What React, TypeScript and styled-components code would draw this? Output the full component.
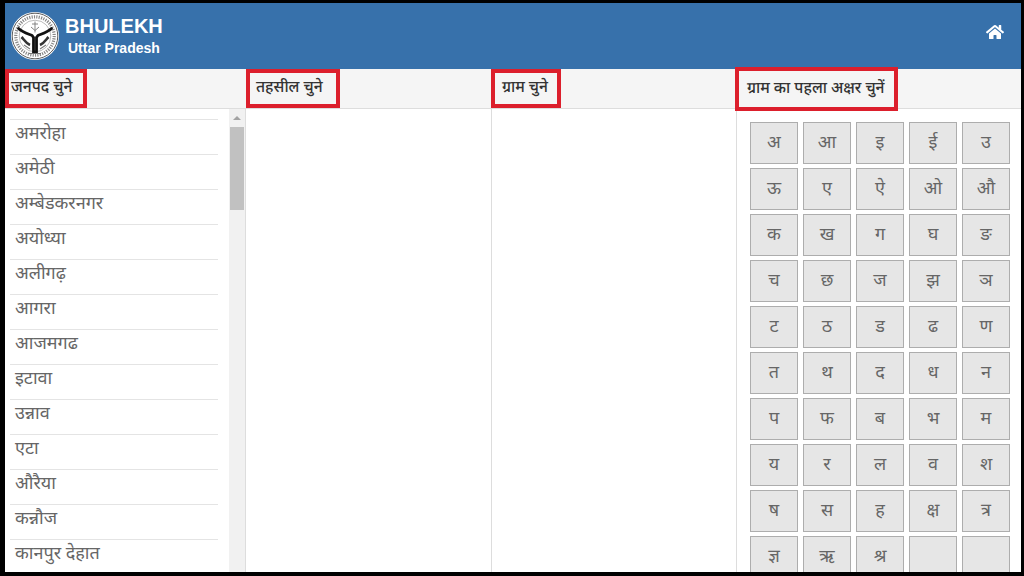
import styled, { createGlobalStyle } from 'styled-components';
import { FaHome } from 'react-icons/fa';

const DISTRICTS = [
  'अमरोहा', 'अमेठी', 'अम्बेडकरनगर', 'अयोध्या', 'अलीगढ़', 'आगरा', 'आजमगढ', 'इटावा', 'उन्नाव', 'एटा',
  'औरैया', 'कन्नौज', 'कानपुर देहात',
];

const LETTERS = [
  'अ', 'आ', 'इ', 'ई', 'उ',
  'ऊ', 'ए', 'ऐ', 'ओ', 'औ',
  'क', 'ख', 'ग', 'घ', 'ङ',
  'च', 'छ', 'ज', 'झ', 'ञ',
  'ट', 'ठ', 'ड', 'ढ', 'ण',
  'त', 'थ', 'द', 'ध', 'न',
  'प', 'फ', 'ब', 'भ', 'म',
  'य', 'र', 'ल', 'व', 'श',
  'ष', 'स', 'ह', 'क्ष', 'त्र',
  'ज्ञ', 'ऋ', 'श्र', '', '',
];

const Emblem = () => (
  <svg width="48" height="48" viewBox="0 0 48 48">
    <circle cx="24" cy="24" r="24" fill="#fff" />
    <circle cx="24" cy="24" r="22.8" fill="none" stroke="#333" strokeWidth="0.8" />
    <circle cx="24" cy="24" r="15.8" fill="none" stroke="#777" strokeWidth="0.5" />
    <circle cx="24" cy="24" r="19.2" fill="none" stroke="#888" strokeWidth="3.2" strokeDasharray="1.2 1.2" />
    <path d="M24 9.500v11M21 12h6M20 15l4 3.500 4-3.500" fill="none" stroke="#777" strokeWidth="0.9" />
    <path
      d="M7.500 16.500c3.500 3.500 10 5.500 13.500 7l1.500 2V40h3V25.500l1.500-2c3.500-1.500 10-3.500 13.500-7"
      fill="none"
      stroke="#111"
      strokeWidth="2.8"
      strokeLinecap="round"
    />
    <path d="M10.500 25c2 2 4 6 8.500 8M37.500 25c-2 2-4 6-8.500 8" fill="none" stroke="#333" strokeWidth="2.6" />
    <path d="M13 33l6 4M35 33l-6 4M18 41.500h12" fill="none" stroke="#777" strokeWidth="1.1" />
  </svg>
);

const App = () => {
  return (
    <Frame>
      <GlobalStyle />
      <Header>
        <Brand>
          <Emblem />
          <BrandText>
            <BrandTitle>BHULEKH</BrandTitle>
            <BrandSub>Uttar Pradesh</BrandSub>
          </BrandText>
        </Brand>
        <HomeLink>
          <FaHome size={18} />
        </HomeLink>
      </Header>

      <Columns>
        <ColumnHead>
          <Label $width={82} $left={2}>
            जनपद चुने
          </Label>
        </ColumnHead>
        <ColumnHead>
          <Label $width={94} $left={6}>
            तहसील चुने
          </Label>
        </ColumnHead>
        <ColumnHead>
          <Label $shift={-1} $width={70} $left={7}>
            ग्राम चुने
          </Label>
        </ColumnHead>
        <ColumnHead>
          <Label $shift={-2} $tall $width={163} $left={8}>
            ग्राम का पहला अक्षर चुनें
          </Label>
        </ColumnHead>

        <Column>
          <DistrictList>
            {DISTRICTS.map((name) => (
              <District key={name}>{name}</District>
            ))}
          </DistrictList>
          <ScrollTrack>
            <ScrollArrow />
            <ScrollThumb />
          </ScrollTrack>
        </Column>
        <Column />
        <Column />
        <LetterGrid>
          {LETTERS.map((letter, i) => (
            <LetterButton key={i}>{letter}</LetterButton>
          ))}
        </LetterGrid>
      </Columns>
    </Frame>
  );
};

export default App;

const DEVANAGARI = `"Noto Sans Devanagari", "Lohit Devanagari", "Liberation Sans", "Noto Sans", sans-serif`;

const GlobalStyle = createGlobalStyle`
  html, body {
    margin: 0;
    height: 576px;
    overflow: hidden;
    background: #000;
  }
  * {
    box-sizing: border-box;
  }
`;

const Frame = styled.div`
  width: 1016px;
  height: 569px;
  margin: 3px 0 0 5px;
  background: #fff;
  overflow: hidden;
  font-family: ${DEVANAGARI};
`;

const Header = styled.header`
  height: 66px;
  background: #3771ab;
  color: #fff;
  display: flex;
  align-items: flex-start;
  justify-content: space-between;
  padding: 9px 17px 0 6px;
`;

const Brand = styled.div`
  display: flex;
  gap: 6px;
`;

const BrandText = styled.div`
  display: flex;
  flex-direction: column;
  padding-top: 2px;
  font-family: 'Liberation Sans', Arial, sans-serif;
  font-weight: 700;
`;

const BrandTitle = styled.div`
  font-size: 20px;
  line-height: 24px;
`;

const BrandSub = styled.div`
  font-size: 14px;
  line-height: 16px;
  margin: 2px 0 0 3px;
`;

const HomeLink = styled.a`
  display: block;
  margin-top: 11px;
  line-height: 0;
  color: #fff;
`;

const Columns = styled.div`
  display: grid;
  grid-template-columns: 241px 246px 245px 1fr;
  grid-template-rows: 40px 485px;
`;

const ColumnHead = styled.div`
  display: flex;
  align-items: center;
  height: 40px;
  background: #f5f5f5;
  border-bottom: 1px solid #ddd;
`;

const Label = styled.div<{ $shift?: number; $tall?: boolean; $width: number; $left: number }>`
  flex: none;
  position: relative;
  z-index: 1;
  left: ${(p) => p.$shift ?? 0}px;
  width: ${(p) => p.$width}px;
  height: ${(p) => (p.$tall ? 44 : 39)}px;
  margin-top: ${(p) => (p.$tall ? 0 : -1)}px;
  display: flex;
  align-items: center;
  padding-left: ${(p) => p.$left}px;
  border: 4px solid #dc1f2c;
  font-size: 15.6px;
  font-weight: 500;
  color: #333;
  white-space: nowrap;
`;

const Column = styled.div`
  position: relative;
  height: 485px;
  border-right: 1px solid #ddd;
`;

const DistrictList = styled.ul`
  list-style: none;
  height: 100%;
  margin: 0;
  padding: 10px 27px 0 5px;
  overflow: hidden;
`;

const District = styled.li`
  height: 35px;
  padding: 2px 5px 0;
  border-top: 1px solid #e4e4e4;
  font-size: 18px;
  line-height: 26px;
  color: #666;
  white-space: nowrap;
`;

const ScrollTrack = styled.div`
  position: absolute;
  top: 0;
  right: 0;
  bottom: 0;
  width: 16px;
  padding: 0 1px;
  background: #f1f1f1;
`;

const ScrollArrow = styled.div`
  width: 0;
  height: 0;
  margin: 7px auto 7px;
  border-left: 4px solid transparent;
  border-right: 4px solid transparent;
  border-bottom: 4px solid #a3a3a3;
`;

const ScrollThumb = styled.div`
  height: 83px;
  background: #c1c1c1;
`;

const LetterGrid = styled.div`
  display: grid;
  grid-template-columns: repeat(5, 48px);
  grid-auto-rows: 42px;
  gap: 4px 5px;
  padding: 13px 0 0 13px;
`;

const LetterButton = styled.button`
  margin: 0;
  padding: 0;
  background: #e6e6e6;
  border: 1px solid #adadad;
  font-family: ${DEVANAGARI};
  font-size: 18px;
  color: #666;
`;
